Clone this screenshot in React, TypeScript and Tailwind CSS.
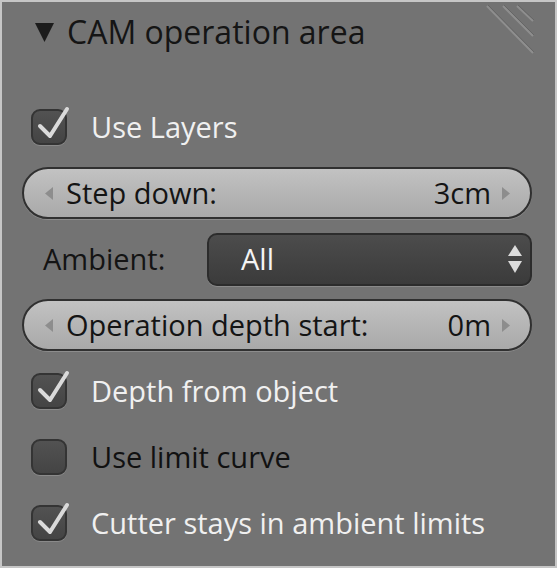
import type { ReactNode } from "react";

const font = { fontFamily: '"Open Sans", "DejaVu Sans", sans-serif' };

const CheckRow = ({ label, checked }: { label: string; checked: boolean }) => (
    <div className="flex h-[66px] items-center pl-[29px]">
        <div className="relative h-[36px] w-[36px]">
            <div className="h-full w-full rounded-[9px] border-2 border-[#343434] bg-gradient-to-b from-[#525252] to-[#444444] shadow-[0_1px_0_#8a8a8a]" />
            {checked && (
                <svg className="absolute -top-[3px] left-0" width="40" height="40" viewBox="0 0 40 40">
                    <path d="M9 20 L19 30 L36 3" fill="none" stroke="#dadada" strokeWidth="4" strokeLinecap="round" strokeLinejoin="round" />
                </svg>
            )}
        </div>
        <span className={`ml-[24px] text-[29px] ${checked ? "text-[#f0f0f0]" : "text-[#111]"}`}>{label}</span>
    </div>
);

const Arrow = ({ dir }: { dir: "l" | "r" }) => (
    <svg width="9" height="13" viewBox="0 0 9 13">
        <path d={dir === "l" ? "M8 0 L0 6.5 L8 13 Z" : "M1 0 L9 6.5 L1 13 Z"} fill="#8d8d8d" />
    </svg>
);

const NumField = ({ label, value }: { label: string; value: string }) => (
    <div className="flex h-[66px] items-center pl-[20px] pr-[23px]">
        <div className="flex h-[52px] w-full items-center rounded-full border-2 border-[#303030] bg-gradient-to-b from-[#c2c2c2] to-[#a9a9a9] pl-[21px] pr-[20px] shadow-[0_1px_0_#8c8c8c] text-[29px] text-[#141414]">
            <Arrow dir="l" />
            <span className="ml-[12px] flex-1">{label}</span>
            <span className="mr-[10px]">{value}</span>
            <Arrow dir="r" />
        </div>
    </div>
);

const Row = ({ children }: { children: ReactNode }) => (
    <div className="flex h-[66px] items-center pl-[20px] pr-[23px]">{children}</div>
);

export default function App() {
    return (
        <div className="relative h-[568px] w-[557px] overflow-hidden border-2 border-[#c6c6c6] bg-[#737373]" style={font}>
            {/* drag handle */}
            <svg className="absolute right-[20px] top-[3px]" width="52" height="52" viewBox="0 0 52 52">
                <g strokeWidth="2">
                    <path d="M4 1 L50 48" stroke="#8e8e8e" />
                    <path d="M5 0 L51 47" stroke="#666" strokeWidth="1" />
                    <path d="M20 1 L50 31" stroke="#8e8e8e" />
                    <path d="M21 0 L51 30" stroke="#666" strokeWidth="1" />
                    <path d="M34 1 L50 16" stroke="#8e8e8e" />
                    <path d="M35 0 L51 15" stroke="#666" strokeWidth="1" />
                </g>
            </svg>

            <div className="flex h-[60px] items-center pl-[33px]">
                <svg width="19" height="20" viewBox="0 0 19 20">
                    <path d="M0 1 L19 1 L9.5 20 Z" fill="#1c1c1c" />
                </svg>
                <span className="ml-[13px] text-[32px] text-[#151515]">CAM operation area</span>
            </div>

            <div className="mt-[32px] flex flex-col">
                <CheckRow label="Use Layers" checked />
                <NumField label="Step down:" value="3cm" />
                <Row>
                    <span className="w-[185px] pl-[21px] text-[29px] text-[#141414]">Ambient:</span>
                    <div className="flex h-[53px] flex-1 items-center rounded-[10px] border-2 border-[#2c2c2c] bg-gradient-to-b from-[#4c4c4c] to-[#3b3b3b] pl-[32px] pr-[8px] shadow-[0_1px_0_#8a8a8a]">
                        <span className="flex-1 text-[29px] text-[#f4f4f4]">All</span>
                        <svg width="14" height="28" viewBox="0 0 14 28">
                            <path d="M7 0 L14 11 L0 11 Z" fill="#dcdcdc" />
                            <path d="M0 16 L14 16 L7 28 Z" fill="#dcdcdc" />
                        </svg>
                    </div>
                </Row>
                <NumField label="Operation depth start:" value="0m" />
                <CheckRow label="Depth from object" checked />
                <CheckRow label="Use limit curve" checked={false} />
                <CheckRow label="Cutter stays in ambient limits" checked />
            </div>
        </div>
    );
}
